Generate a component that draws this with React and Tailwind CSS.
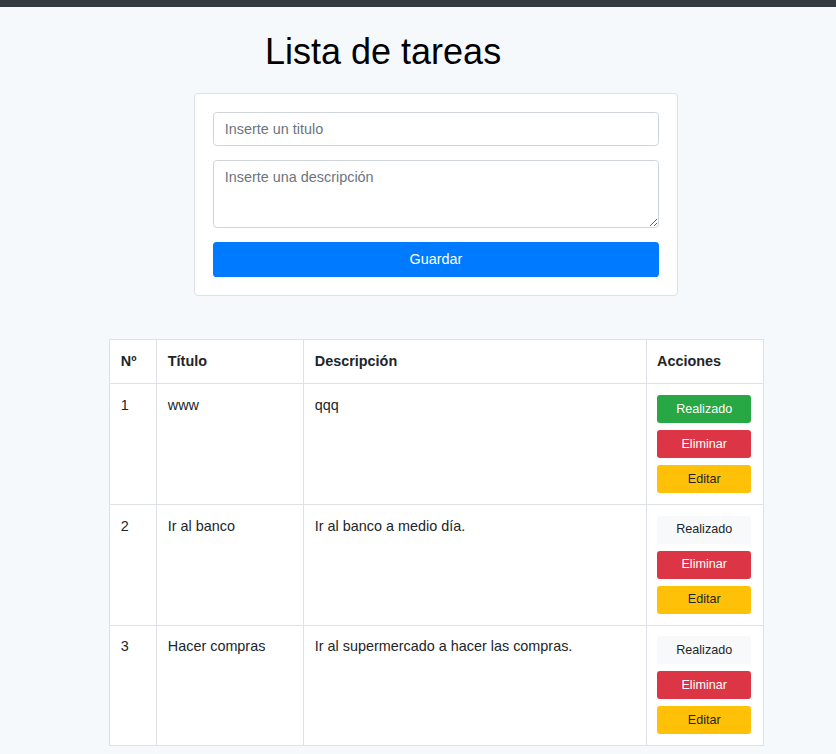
import { useState } from "react";

const tareas = [
  { id: 1, titulo: "www", descripcion: "qqq", hecho: true },
  { id: 2, titulo: "Ir al banco", descripcion: "Ir al banco a medio día.", hecho: false },
  { id: 3, titulo: "Hacer compras", descripcion: "Ir al supermercado a hacer las compras.", hecho: false },
];

export default function App() {
  const [titulo, setTitulo] = useState("");
  const [descripcion, setDescripcion] = useState("");

  return (
    <div className="min-h-[754px] bg-[#f5f9fc] text-[#212529] text-[14.4px] leading-[1.5] font-['Liberation_Sans',Arial,sans-serif]">
      <div className="h-[7px] bg-[#343a40]" />

      <h1 className="mt-[23px] ml-[265px] text-[36px] leading-[1.2] text-black">Lista de tareas</h1>

      <form
        onSubmit={(e) => e.preventDefault()}
        className="mt-[20px] ml-[194px] w-[484px] bg-white border border-[#dee2e6] rounded-[4px] p-[18px] flex flex-col gap-[14px]"
      >
        <input
          placeholder="Inserte un titulo"
          value={titulo}
          onChange={(e) => setTitulo(e.target.value)}
          className="h-[34px] px-[10.8px] border border-[#ced4da] rounded-[3.6px] text-[14.4px] text-[#495057] placeholder:text-[#6c757d] outline-none"
        />
        <textarea
          placeholder="Inserte una descripción"
          value={descripcion}
          onChange={(e) => setDescripcion(e.target.value)}
          className="h-[68px] px-[10.8px] py-[5.4px] border border-[#ced4da] rounded-[3.6px] text-[14.4px] leading-[1.5] text-[#495057] placeholder:text-[#6c757d] outline-none"
        />
        <button type="submit" className="h-[35px] bg-[#007bff] text-white text-[14.4px] rounded-[3.6px]">
          Guardar
        </button>
      </form>

      <table className="mt-[43px] ml-[109px] w-[654px] border-collapse bg-white table-fixed">
        <colgroup>
          <col className="w-[47px]" />
          <col className="w-[147px]" />
          <col className="w-[343px]" />
          <col className="w-[117px]" />
        </colgroup>
        <thead>
          <tr className="font-bold">
            <th className="border border-[#dee2e6] p-[10.8px] text-left">Nº</th>
            <th className="border border-[#dee2e6] p-[10.8px] text-left">Título</th>
            <th className="border border-[#dee2e6] p-[10.8px] text-left">Descripción</th>
            <th className="border border-[#dee2e6] py-[10.8px] pl-[10px] pr-[11.6px] text-left">Acciones</th>
          </tr>
        </thead>
        <tbody>
          {tareas.map((t) => (
            <tr key={t.id}>
              <td className="border border-[#dee2e6] p-[10.8px] align-top">{t.id}</td>
              <td className="border border-[#dee2e6] p-[10.8px] align-top">{t.titulo}</td>
              <td className="border border-[#dee2e6] p-[10.8px] align-top">{t.descripcion}</td>
              <td className="border border-[#dee2e6] py-[10.8px] pl-[10px] pr-[11.6px] align-top">
                <div className="flex flex-col gap-[7px] text-[12.6px] leading-[1.5]">
                  <button
                    className={`h-[28px] rounded-[3px] ${t.hecho ? "bg-[#28a745] text-white" : "bg-[#f8f9fa] text-[#212529]"}`}
                  >
                    Realizado
                  </button>
                  <button className="h-[28px] rounded-[3px] bg-[#dc3545] text-white">Eliminar</button>
                  <button className="h-[28px] rounded-[3px] bg-[#ffc107] text-[#212529]">Editar</button>
                </div>
              </td>
            </tr>
          ))}
        </tbody>
      </table>
    </div>
  );
}
